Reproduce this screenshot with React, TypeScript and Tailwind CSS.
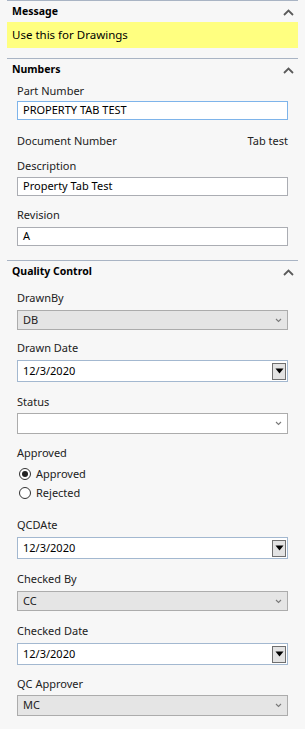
import React from "react";

const font = { fontFamily: '"Noto Sans", "Segoe UI", sans-serif' };

function Chevron() {
  return (
    <svg width="11" height="7" viewBox="0 0 11 7" className="shrink-0">
      <path d="M1 6 L5.5 1.5 L10 6" fill="none" stroke="#5a5a5a" strokeWidth="1.8" />
    </svg>
  );
}

function SmallChevron() {
  return (
    <svg width="7" height="5" viewBox="0 0 7 5">
      <path d="M1 1 L3.5 3.5 L6 1" fill="none" stroke="#7a7a7a" strokeWidth="1.1" />
    </svg>
  );
}

function Header({ title }: { title: string }) {
  return (
    <div className="flex items-center justify-between h-5 pl-[5px] pr-[4px]">
      <span className="text-[10.5px] font-bold text-black">{title}</span>
      <Chevron />
    </div>
  );
}

function Label({ text, className = "" }: { text: string; className?: string }) {
  return <div className={`h-4 leading-4 text-[11px] text-[#222] ${className}`}>{text}</div>;
}

function TextBox({ value, focused, className = "" }: { value: string; focused?: boolean; className?: string }) {
  return (
    <div
      className={`h-[19px] flex items-center pl-[5px] bg-white border text-[11px] text-black ${
        focused ? "border-[#7eb4ea]" : "border-[#abadb3]"
      } ${className}`}
    >
      {value}
    </div>
  );
}

function Select({ value, white, className = "" }: { value: string; white?: boolean; className?: string }) {
  return (
    <div
      className={`h-[20px] flex items-center justify-between pl-[5px] pr-[5px] border border-[#acacac] text-[11px] text-[#222] ${
        white ? "bg-white" : "bg-[#e5e5e5]"
      } ${className}`}
    >
      <span>{value}</span>
      <SmallChevron />
    </div>
  );
}

function DateBox({ value, className = "" }: { value: string; className?: string }) {
  return (
    <div
      className={`h-[22px] flex items-center justify-between pl-[5px] pr-[1px] bg-white border border-[#a3b8d0] text-[11px] text-black ${className}`}
    >
      <span>{value}</span>
      <div className="w-[14px] h-[17px] flex items-center justify-center bg-[#e3e3e3] border border-[#6f6f6f]">
        <svg width="9" height="6" viewBox="0 0 9 6">
          <path d="M0.5 0.5 L8.5 0.5 L4.5 5.5 Z" fill="#000" />
        </svg>
      </div>
    </div>
  );
}

function Radio({ label, checked, className = "" }: { label: string; checked?: boolean; className?: string }) {
  return (
    <div className={`flex items-center h-4 gap-[5px] pl-[2px] ${className}`}>
      <div className="w-[12px] h-[12px] rounded-full border border-[#333] bg-white flex items-center justify-center">
        {checked && <div className="w-[6px] h-[6px] rounded-full bg-[#222]" />}
      </div>
      <span className="text-[11px] text-[#222]">{label}</span>
    </div>
  );
}

export default function App() {
  return (
    <div className="w-[305px] h-[729px] bg-[#f7f7f7] overflow-hidden" style={font}>
      <div className="ml-[7px] w-[291px] border-t border-[#a9b4c4] pt-[1px]">
        <Header title="Message" />
        <div className="h-[26px] bg-[#ffff80] flex items-center pl-[5px] text-[11.5px] text-black">
          Use this for Drawings
        </div>

        <div className="mt-[10px] border-t border-[#a9b4c4] pt-[1px]">
          <Header title="Numbers" />
          <div className="pl-[10px] pr-[10px]">
            <Label text="Part Number" className="mt-[3px]" />
            <TextBox value="PROPERTY TAB TEST" focused className="mt-[2px]" />
            <div className="mt-[13px] flex justify-between">
              <Label text="Document Number" />
              <Label text="Tab test" />
            </div>
            <Label text="Description" className="mt-[9px]" />
            <TextBox value="Property Tab Test" className="mt-[3px]" />
            <Label text="Revision" className="mt-[11px]" />
            <TextBox value="A" className="mt-[4px] h-[18px]" />
          </div>
        </div>

        <div className="mt-[14px] border-t border-[#a9b4c4] pt-[1px]">
          <Header title="Quality Control" />
          <div className="pl-[10px] pr-[10px]">
            <Label text="DrawnBy" className="mt-[8px]" />
            <Select value="DB" className="mt-[4px] h-[19px]" />
            <Label text="Drawn Date" className="mt-[10px]" />
            <DateBox value="12/3/2020" className="mt-[4px]" />
            <Label text="Status" className="mt-[12px]" />
            <Select value="" white className="mt-[3px] h-[21px]" />
            <Label text="Approved" className="mt-[11px]" />
            <Radio label="Approved" checked className="mt-[5px]" />
            <Radio label="Rejected" className="mt-[3px]" />
            <Label text="QCDAte" className="mt-[16px]" />
            <DateBox value="12/3/2020" className="mt-[4px] h-[21px]" />
            <Label text="Checked By" className="mt-[12px]" />
            <Select value="CC" className="mt-[4px] h-[19px]" />
            <Label text="Checked Date" className="mt-[12px]" />
            <DateBox value="12/3/2020" className="mt-[4px] h-[21px]" />
            <Label text="QC Approver" className="mt-[11px]" />
            <Select value="MC" className="mt-[3px] h-[21px]" />
          </div>
        </div>
      </div>
    </div>
  );
}
